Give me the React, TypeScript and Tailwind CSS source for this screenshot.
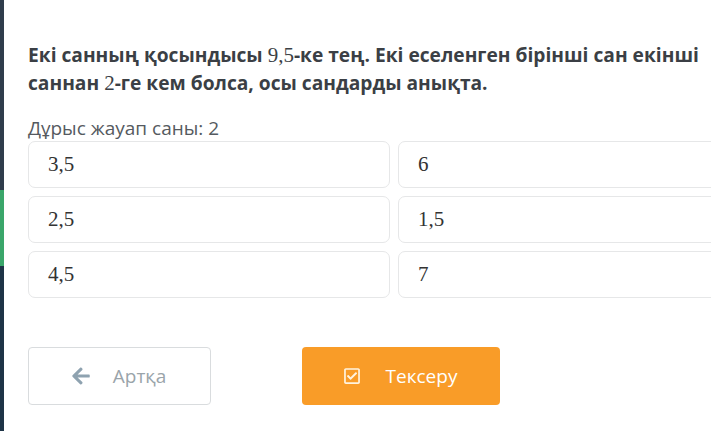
import { FaArrowLeft, FaRegCheckSquare } from "react-icons/fa";

const OPTIONS = ["3,5", "6", "2,5", "1,5", "4,5", "7"];

function MathText({ children }: { children: string }) {
  return (
    <span className="font-['Liberation_Serif','DejaVu_Serif',serif] text-[21px] leading-none font-normal">
      {children}
    </span>
  );
}

export default function App() {
  return (
    <div className="flex h-[431px] w-[711px] overflow-hidden bg-white font-['Open_Sans',sans-serif]">
      <aside className="flex w-[4px] shrink-0 flex-col">
        <div className="h-[190px] bg-[#2f3d4c]" />
        <div className="h-[76px] bg-[#3aa66a]" />
        <div className="flex-1 bg-[#1e3447]" />
      </aside>

      <main className="flex min-w-0 flex-1 flex-col pl-[24px] pt-[41px]">
        <h2 className="w-[700px] text-[19.2px] font-bold leading-[28px] text-[#3b3f45]">
          Екі санның қосындысы <MathText>9,5</MathText>-ке тең. Екі еселенген бірінші сан екінші саннан{" "}
          <MathText>2</MathText>-ге кем болса, осы сандарды анықта.
        </h2>

        <p className="mt-[20px] text-[19px] leading-[22px] text-[#555a60]">Дұрыс жауап саны: 2</p>

        <div className="mt-[2px] grid w-[732px] shrink-0 grid-cols-2 gap-x-[8px] gap-y-[8px]">
          {OPTIONS.map((option) => (
            <div
              key={option}
              className="flex h-[47px] items-center rounded-[7px] border border-[#e6e7e8] bg-white pl-[19px] font-['Liberation_Serif','DejaVu_Serif',serif] text-[21px] text-[#333]"
            >
              {option}
            </div>
          ))}
        </div>

        <div className="mt-[49px] flex items-center gap-[91px]">
          <button
            type="button"
            className="flex h-[58px] w-[183px] items-center justify-center gap-[22px] rounded-[4px] border border-[#d9dcde] bg-white pr-[2px] text-[19px] text-[#9aa4aa]"
          >
            <FaArrowLeft className="h-[20px] w-[20px] text-[#8ea2b0]" />
            <span>Артқа</span>
          </button>
          <button
            type="button"
            className="flex h-[58px] w-[198px] items-center justify-center gap-[25px] rounded-[4px] bg-[#f99c28] pr-[2px] text-[19px] text-white"
          >
            <FaRegCheckSquare className="h-[18px] w-[18px] text-[#fff3df]" />
            <span>Тексеру</span>
          </button>
        </div>
      </main>
    </div>
  );
}
